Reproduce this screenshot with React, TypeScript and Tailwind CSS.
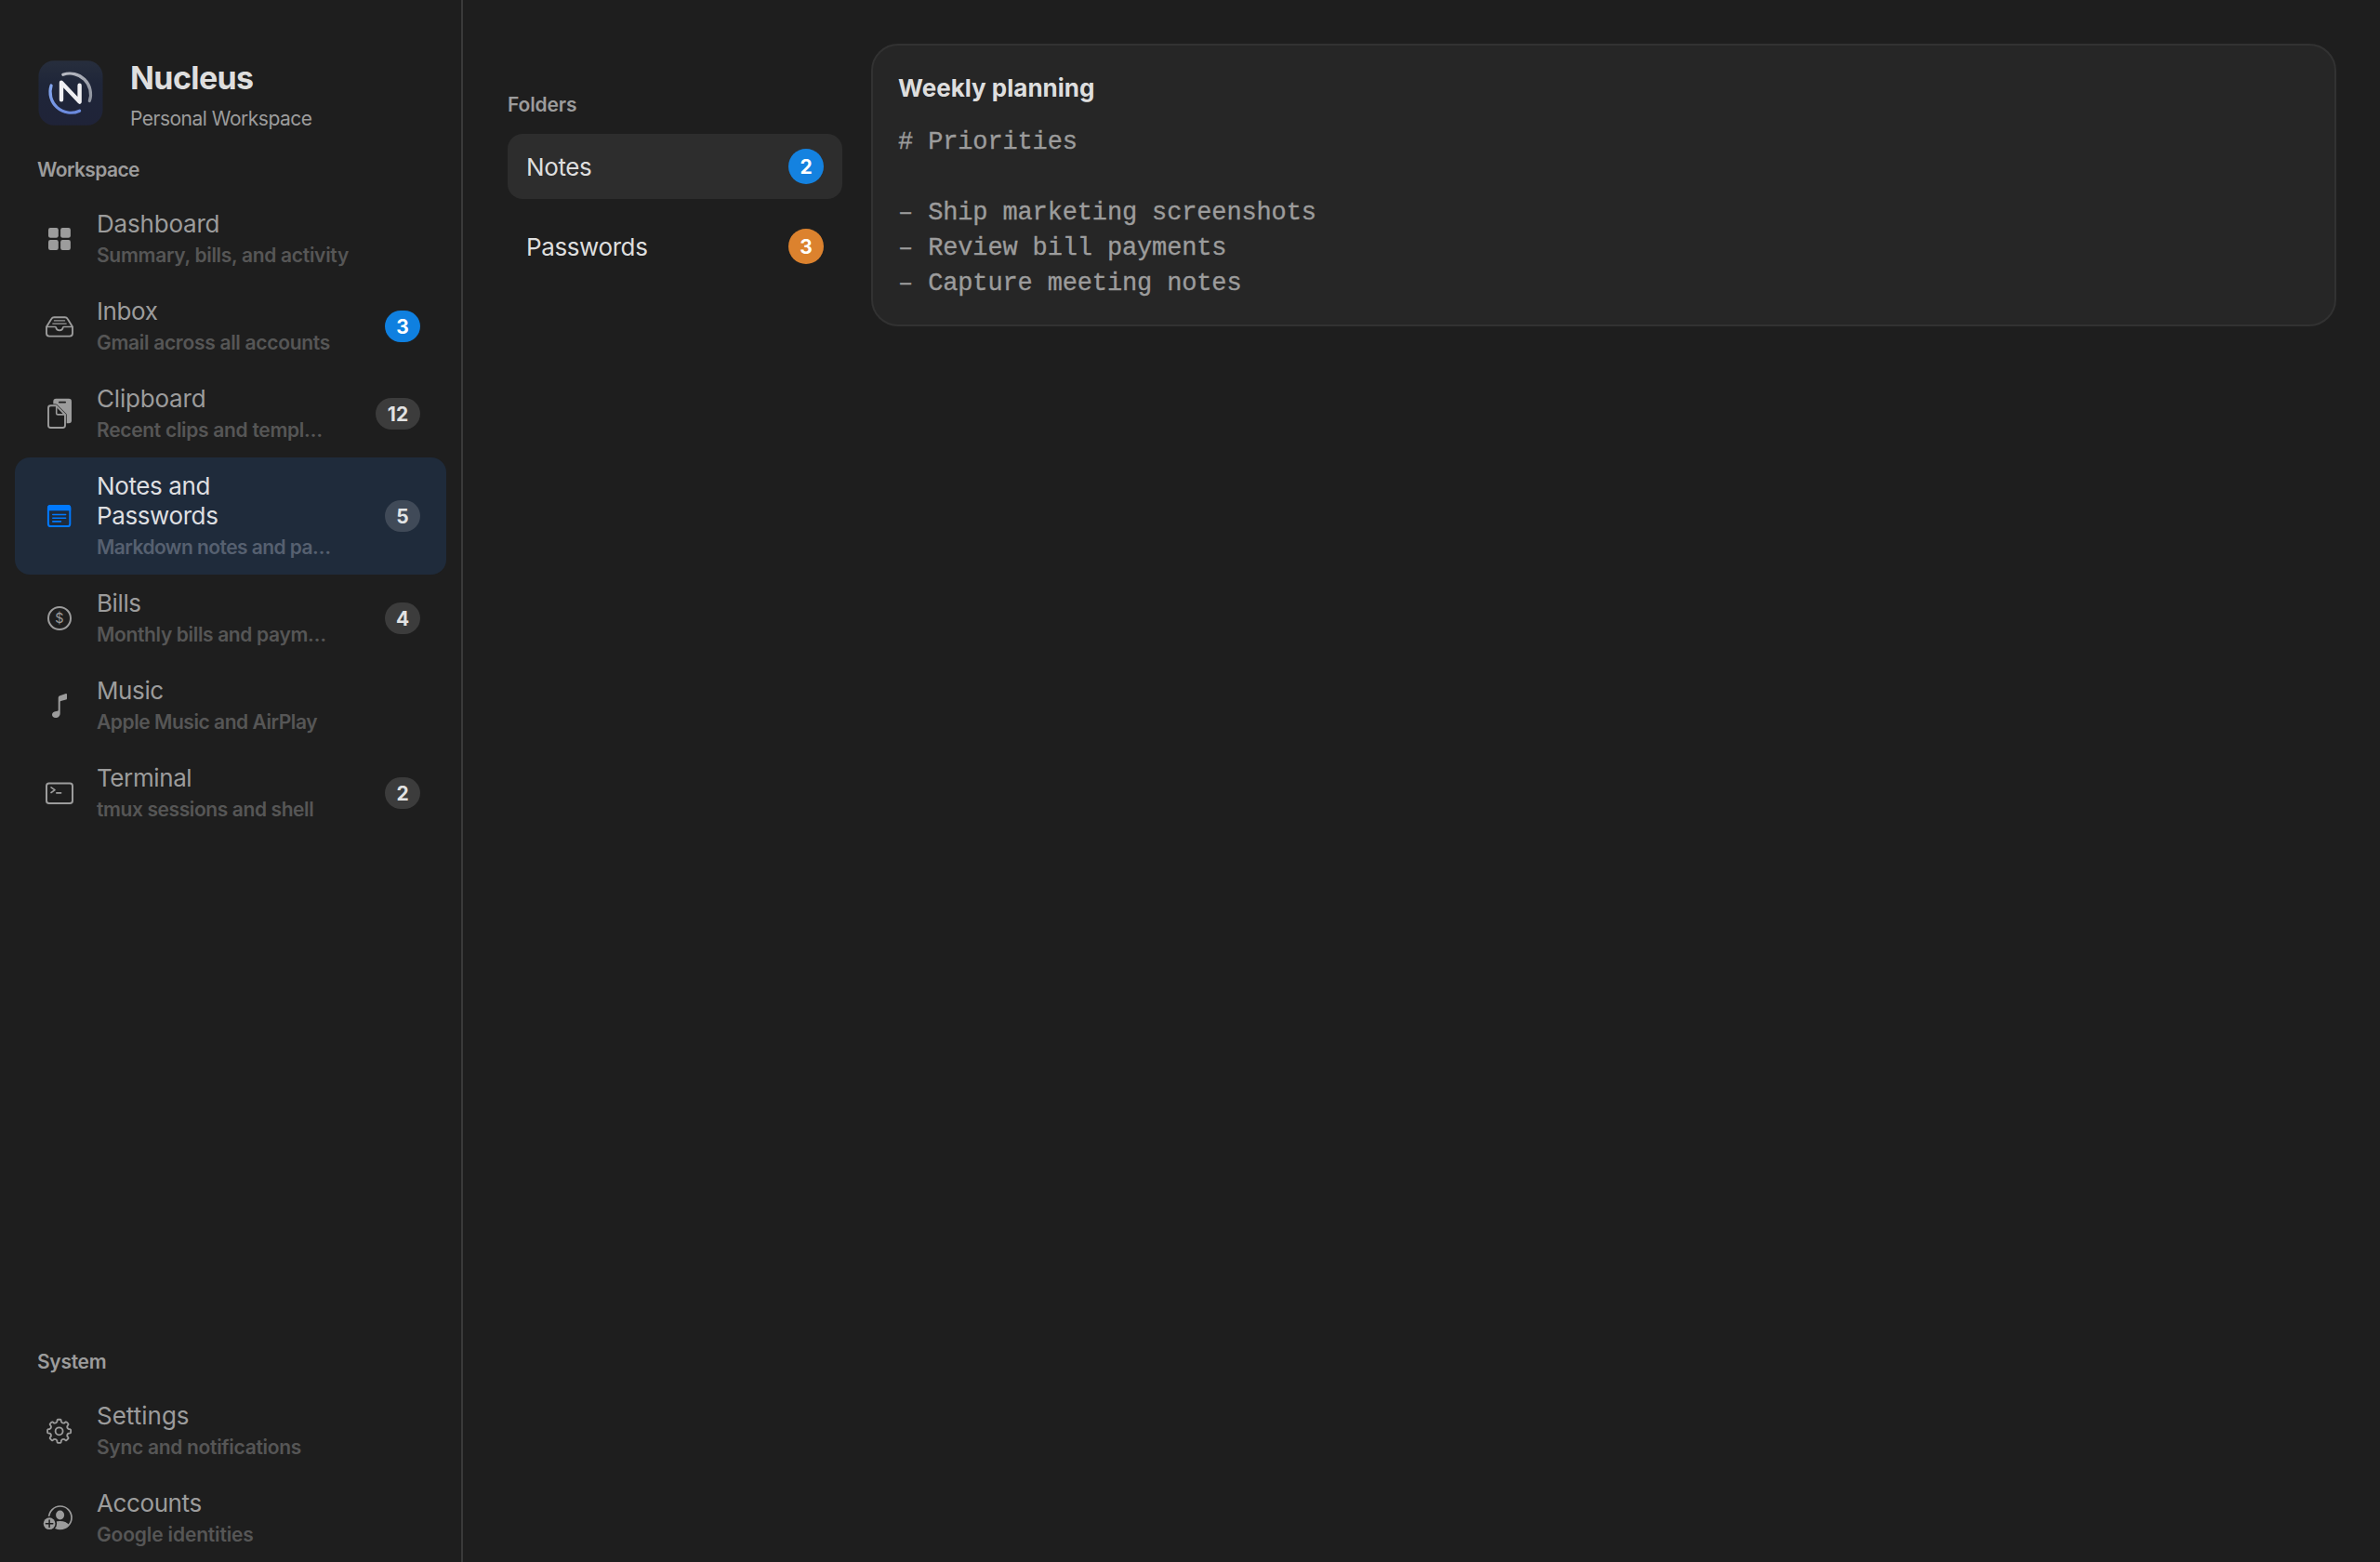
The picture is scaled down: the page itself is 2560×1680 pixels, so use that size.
import type { ReactNode } from 'react';
import clsx from 'clsx';

interface NavItem {
  title: string;
  subtitle: string;
  icon: ReactNode;
  badge?: string;
  accent?: boolean;
  active?: boolean;
  titleTracking?: string;
  subtitleTracking?: string;
}

function NucleusLogo() {
  return (
    <svg width="70" height="70" viewBox="0 0 70 70" fill="none">
      <defs>
        <linearGradient id="logo-bg" x1="0" y1="0" x2="0" y2="1">
          <stop offset="0" stopColor="#272e3d" />
          <stop offset="0.35" stopColor="#1f2639" />
          <stop offset="1" stopColor="#1f2338" />
        </linearGradient>
        <linearGradient id="logo-blue" x1="0" y1="0" x2="0.6" y2="1">
          <stop offset="0" stopColor="#84a6ee" />
          <stop offset="1" stopColor="#6b8ade" />
        </linearGradient>
        <linearGradient id="logo-gray" x1="0" y1="0" x2="1" y2="1">
          <stop offset="0" stopColor="#b9bcc4" />
          <stop offset="1" stopColor="#8d929d" />
        </linearGradient>
      </defs>
      <rect x="0.5" y="0.3" width="69" height="69.4" rx="16.5" fill="url(#logo-bg)" />
      <path d="M26.8 15.3A22.3 22.3 0 0 1 55.3 43.6" stroke="url(#logo-gray)" strokeWidth="3.2" strokeLinecap="round" />
      <path d="M14.1 27A22.3 22.3 0 0 0 44.6 54.2" stroke="url(#logo-blue)" strokeWidth="3.2" strokeLinecap="round" />
      <path d="M25 42.2V23.8L44.6 44.6V26.8" stroke="#f0f0f3" strokeWidth="4.4" strokeLinecap="round" strokeLinejoin="round" />
    </svg>
  );
}

function Icon({ children }: { children: ReactNode }) {
  return (
    <svg width="40" height="40" viewBox="0 0 40 40" fill="none" strokeWidth="2" strokeLinecap="round" strokeLinejoin="round">
      {children}
    </svg>
  );
}

const dashboardIcon = (
  <Icon>
    <g fill="currentColor">
      <rect x="8" y="8" width="10.8" height="10.8" rx="2.2" />
      <rect x="21.1" y="8" width="10.8" height="10.8" rx="2.2" />
      <rect x="8" y="21.1" width="10.8" height="10.8" rx="2.2" />
      <rect x="21.1" y="21.1" width="10.8" height="10.8" rx="2.2" />
    </g>
  </Icon>
);

const inboxIcon = (
  <Icon>
    <g stroke="currentColor">
      <path d="M6 20.5V27.6Q6 30.6 9 30.6H31Q34 30.6 34 27.6V20.5L28.7 12Q27.7 10.3 25.8 10.3H14.2Q12.3 10.3 11.3 12Z" strokeWidth="1.9" />
      <path d="M6.3 20.5H15.3Q16 20.5 16.2 21.2C16.8 25.4 23.2 25.4 23.8 21.2Q24 20.5 24.7 20.5H33.7" strokeWidth="1.7" />
      <path d="M14.4 13.9H25.6M12.8 17.1H27.2" strokeWidth="1.3" />
    </g>
  </Icon>
);

const clipboardIcon = (
  <Icon>
    <rect x="13.3" y="3.8" width="19.7" height="26.4" rx="3" fill="currentColor" />
    <path d="M19.8 7.6H26.2" stroke="#1e1e1e" strokeWidth="1.7" />
    <path d="M10.5 11.3H16L26 21.3V32.5Q26 35 23.5 35H10.5Q8 35 8 32.5V13.8Q8 11.3 10.5 11.3Z" fill="#1e1e1e" stroke="#1e1e1e" strokeWidth="3.4" />
    <path d="M10.5 11.3H16.5L26 21V32.5Q26 35 23.5 35H10.5Q8 35 8 32.5V13.8Q8 11.3 10.5 11.3Z" fill="#1e1e1e" stroke="currentColor" strokeWidth="1.9" />
    <path d="M16.7 11.8V19.4Q16.7 20.9 18.2 20.9H25.6" stroke="currentColor" strokeWidth="1.6" />
  </Icon>
);

const notesIcon = (
  <Icon>
    <rect x="7.9" y="9" width="23.4" height="22" rx="2.6" stroke="currentColor" />
    <path d="M7 14.2V11Q7 8 10 8H29.2Q32.2 8 32.2 11V14.2Z" fill="currentColor" />
    <path d="M12.8 18.5H26.6M12.8 22.2H26.6M12.8 25.9H21.4" stroke="currentColor" strokeWidth="1.6" />
  </Icon>
);

const billsIcon = (
  <Icon>
    <circle cx="20" cy="20" r="12" stroke="currentColor" />
    <text x="20" y="25.2" textAnchor="middle" fill="currentColor" className="font-['Inter'] text-[14.5px]">
      $
    </text>
  </Icon>
);

const musicIcon = (
  <Icon>
    <path
      d="M18.7 11.4Q18.7 9.6 20.4 9.2L26.9 7.1Q28 6.8 28 8V12.2Q28 13.3 26.9 13.6L21.4 15Q20.7 15.2 20.7 15.9V28.2C20.7 31.2 18.4 33.1 15.8 33.1C13.5 33.1 12 31.7 12 29.8C12 27.9 13.3 26.7 15.3 26.3L17.7 25.8Q18.7 25.6 18.7 24.7Z"
      fill="currentColor"
    />
  </Icon>
);

const terminalIcon = (
  <Icon>
    <rect x="6" y="9.4" width="28" height="21.6" rx="2.8" stroke="currentColor" />
    <path d="M11 13.9L15 16.7L11 19.5M16.8 19.9H21.6" stroke="currentColor" strokeWidth="1.6" />
  </Icon>
);

// Eight teeth, 45 degrees apart, with rounded valleys between them
const gearPath = (() => {
  const at = (r: number, deg: number) => {
    const a = ((deg - 90) * Math.PI) / 180;
    return `${(19.6 + r * Math.cos(a)).toFixed(2)} ${(20.3 + r * Math.sin(a)).toFixed(2)}`;
  };
  let d = '';
  for (let i = 0; i < 8; i++) {
    const c = i * 45;
    d += `${i === 0 ? 'M' : 'L'}${at(12, c - 10)}Q${at(12.8, c - 7.5)} ${at(12.6, c - 5)}L${at(12.6, c + 5)}Q${at(12.8, c + 7.5)} ${at(12, c + 10)}`;
    d += `L${at(10.4, c + 12.5)}Q${at(8.8, c + 22.5)} ${at(10.4, c + 32.5)}`;
  }
  return `${d}Z`;
})();

const settingsIcon = (
  <Icon>
    <g stroke="currentColor" strokeWidth="1.8">
      <path d={gearPath} />
      <circle cx="19.6" cy="20.3" r="4" />
    </g>
  </Icon>
);

const accountsIcon = (
  <Icon>
    <defs>
      <clipPath id="avatar">
        <circle cx="20.8" cy="19.2" r="12.4" />
      </clipPath>
    </defs>
    <circle cx="20.8" cy="19.2" r="12.2" stroke="currentColor" strokeWidth="1.7" />
    <ellipse cx="20.6" cy="16.5" rx="4.5" ry="5" fill="currentColor" />
    <path d="M10 34V26Q14.5 23 20.6 23Q27 23 30.6 27.4V34Z" fill="currentColor" clipPath="url(#avatar)" />
    <circle cx="9.1" cy="25.7" r="8" fill="#1e1e1e" />
    <circle cx="9.1" cy="25.7" r="6.4" fill="currentColor" />
    <path d="M9.1 22V29.4M5.4 25.7H12.8" stroke="#1e1e1e" strokeWidth="1.5" />
  </Icon>
);

const workspaceItems: NavItem[] = [
  { title: 'Dashboard', subtitle: 'Summary, bills, and activity', icon: dashboardIcon, titleTracking: 'tracking-[-0.2px]' },
  { title: 'Inbox', subtitle: 'Gmail across all accounts', icon: inboxIcon, badge: '3', accent: true },
  { title: 'Clipboard', subtitle: 'Recent clips and templ…', icon: clipboardIcon, badge: '12', titleTracking: 'tracking-[-0.2px]' },
  {
    title: 'Notes and\nPasswords',
    subtitle: 'Markdown notes and pa…',
    icon: notesIcon,
    badge: '5',
    active: true,
    subtitleTracking: 'tracking-[-0.55px]',
  },
  { title: 'Bills', subtitle: 'Monthly bills and paym…', icon: billsIcon, badge: '4', subtitleTracking: 'tracking-[-0.35px]' },
  { title: 'Music', subtitle: 'Apple Music and AirPlay', icon: musicIcon, subtitleTracking: 'tracking-[-0.45px]' },
  { title: 'Terminal', subtitle: 'tmux sessions and shell', icon: terminalIcon, badge: '2', subtitleTracking: 'tracking-[-0.4px]' },
];

const systemItems: NavItem[] = [
  { title: 'Settings', subtitle: 'Sync and notifications', icon: settingsIcon, titleTracking: 'tracking-[0px]' },
  { title: 'Accounts', subtitle: 'Google identities', icon: accountsIcon, subtitleTracking: 'tracking-[-0.15px]' },
];

const noteLines = ['# Priorities', '', '– Ship marketing screenshots', '– Review bill payments', '– Capture meeting notes'];

function NavRow({ item }: { item: NavItem }) {
  return (
    <div
      className={clsx(
        'mx-4 flex items-center rounded-2xl py-[15px] pr-7 pl-7',
        item.active ? 'bg-[#1f2b3b]' : 'bg-transparent'
      )}
    >
      <span className={clsx('shrink-0', item.active ? 'text-[#0079ff]' : 'text-[#9c9c9c]')}>{item.icon}</span>
      <div className="ml-5 flex-1">
        <p
          className={clsx(
            'text-[26px] leading-8 whitespace-pre',
            item.titleTracking ?? 'tracking-[-0.4px]',
            item.active ? 'text-[#dedfe1]' : 'text-[#9c9c9c]'
          )}
        >
          {item.title}
        </p>
        <p
          className={clsx(
            'mt-1 text-[21px] leading-7 font-semibold whitespace-nowrap',
            item.subtitleTracking ?? 'tracking-[-0.3px]',
            item.active ? 'text-[#566070]' : 'text-[#565656]'
          )}
        >
          {item.subtitle}
        </p>
      </div>
      {item.badge && (
        <span
          className={clsx(
            'flex h-[34px] items-center justify-center rounded-full px-3 text-[21px] leading-none font-bold',
            item.badge.length > 1 ? 'w-12' : 'w-[38px]',
            item.accent ? 'bg-[#0f80e0] text-white' : item.active ? 'bg-[#404a58] text-[#e2e4e6]' : 'bg-[#3c3c3c] text-[#e2e2e2]'
          )}
        >
          {item.badge}
        </span>
      )}
    </div>
  );
}

function FolderRow({ name, count, color, selected }: { name: string; count: number; color: string; selected?: boolean }) {
  return (
    <div className={clsx('flex h-[70px] items-center justify-between rounded-2xl pr-5 pl-5', selected && 'bg-[#2d2d2d]')}>
      <span className="pt-0.5 text-[26px] leading-8 tracking-[-0.4px] text-[#dedede]">{name}</span>
      <span className={clsx('flex size-[38px] items-center justify-center rounded-full text-[21px] leading-none font-bold text-white', color)}>
        {count}
      </span>
    </div>
  );
}

export default function App() {
  return (
    <div className="flex h-[1680px] w-[2560px] overflow-hidden bg-[#1e1e1e] font-['Inter',sans-serif] antialiased">
      <aside className="flex w-[498px] shrink-0 flex-col border-r-2 border-[#3a3a3a] pt-[63px]">
        <header className="flex h-[106px] pl-[41px]">
          <div className="mt-0.5">
            <NucleusLogo />
          </div>
          <div className="ml-[29px]">
            <h1 className="text-[34px] leading-[42px] font-bold tracking-[-0.6px] text-[#dedede]">Nucleus</h1>
            <p className="mt-[9px] text-[21px] leading-7 tracking-[-0.5px] text-[#9c9c9c]">Personal Workspace</p>
          </div>
        </header>

        <h2 className="mb-[13px] pl-10 text-[21px] leading-7 font-semibold tracking-[-0.6px] text-[#9c9c9c]">Workspace</h2>
        <nav>
          {workspaceItems.map(item => (
            <NavRow key={item.title} item={item} />
          ))}
        </nav>

        <h2 className="mt-auto mb-[13px] pl-10 text-[21px] leading-7 font-semibold tracking-[-0.3px] text-[#9c9c9c]">System</h2>
        <nav>
          {systemItems.map(item => (
            <NavRow key={item.title} item={item} />
          ))}
        </nav>
      </aside>

      <main className="flex flex-1 items-start gap-[31px] pr-[47px] pl-12">
        <section className="w-[360px] shrink-0 pt-[99px]">
          <h2 className="mb-[17px] text-[21px] leading-7 font-semibold tracking-[-0.15px] text-[#9c9c9c]">Folders</h2>
          <div className="flex flex-col gap-4">
            <FolderRow name="Notes" count={2} color="bg-[#1482e0]" selected />
            <FolderRow name="Passwords" count={3} color="bg-[#dc822e]" />
          </div>
        </section>

        <article className="mt-[47px] h-[304px] flex-1 rounded-[29px] border-2 border-[#323232] bg-[#262626] px-[27px] pt-[30px]">
          <h3 className="text-[26px] leading-8 font-bold text-[#dedede]">Weekly planning</h3>
          <pre className="mt-[23px] font-['Liberation_Mono',monospace] text-[27px] leading-[38px] tracking-[-0.14px] text-[#9c9c9c] [-webkit-text-stroke:0.35px_#9c9c9c]">
            {noteLines.join('\n')}
          </pre>
        </article>
      </main>
    </div>
  );
}
